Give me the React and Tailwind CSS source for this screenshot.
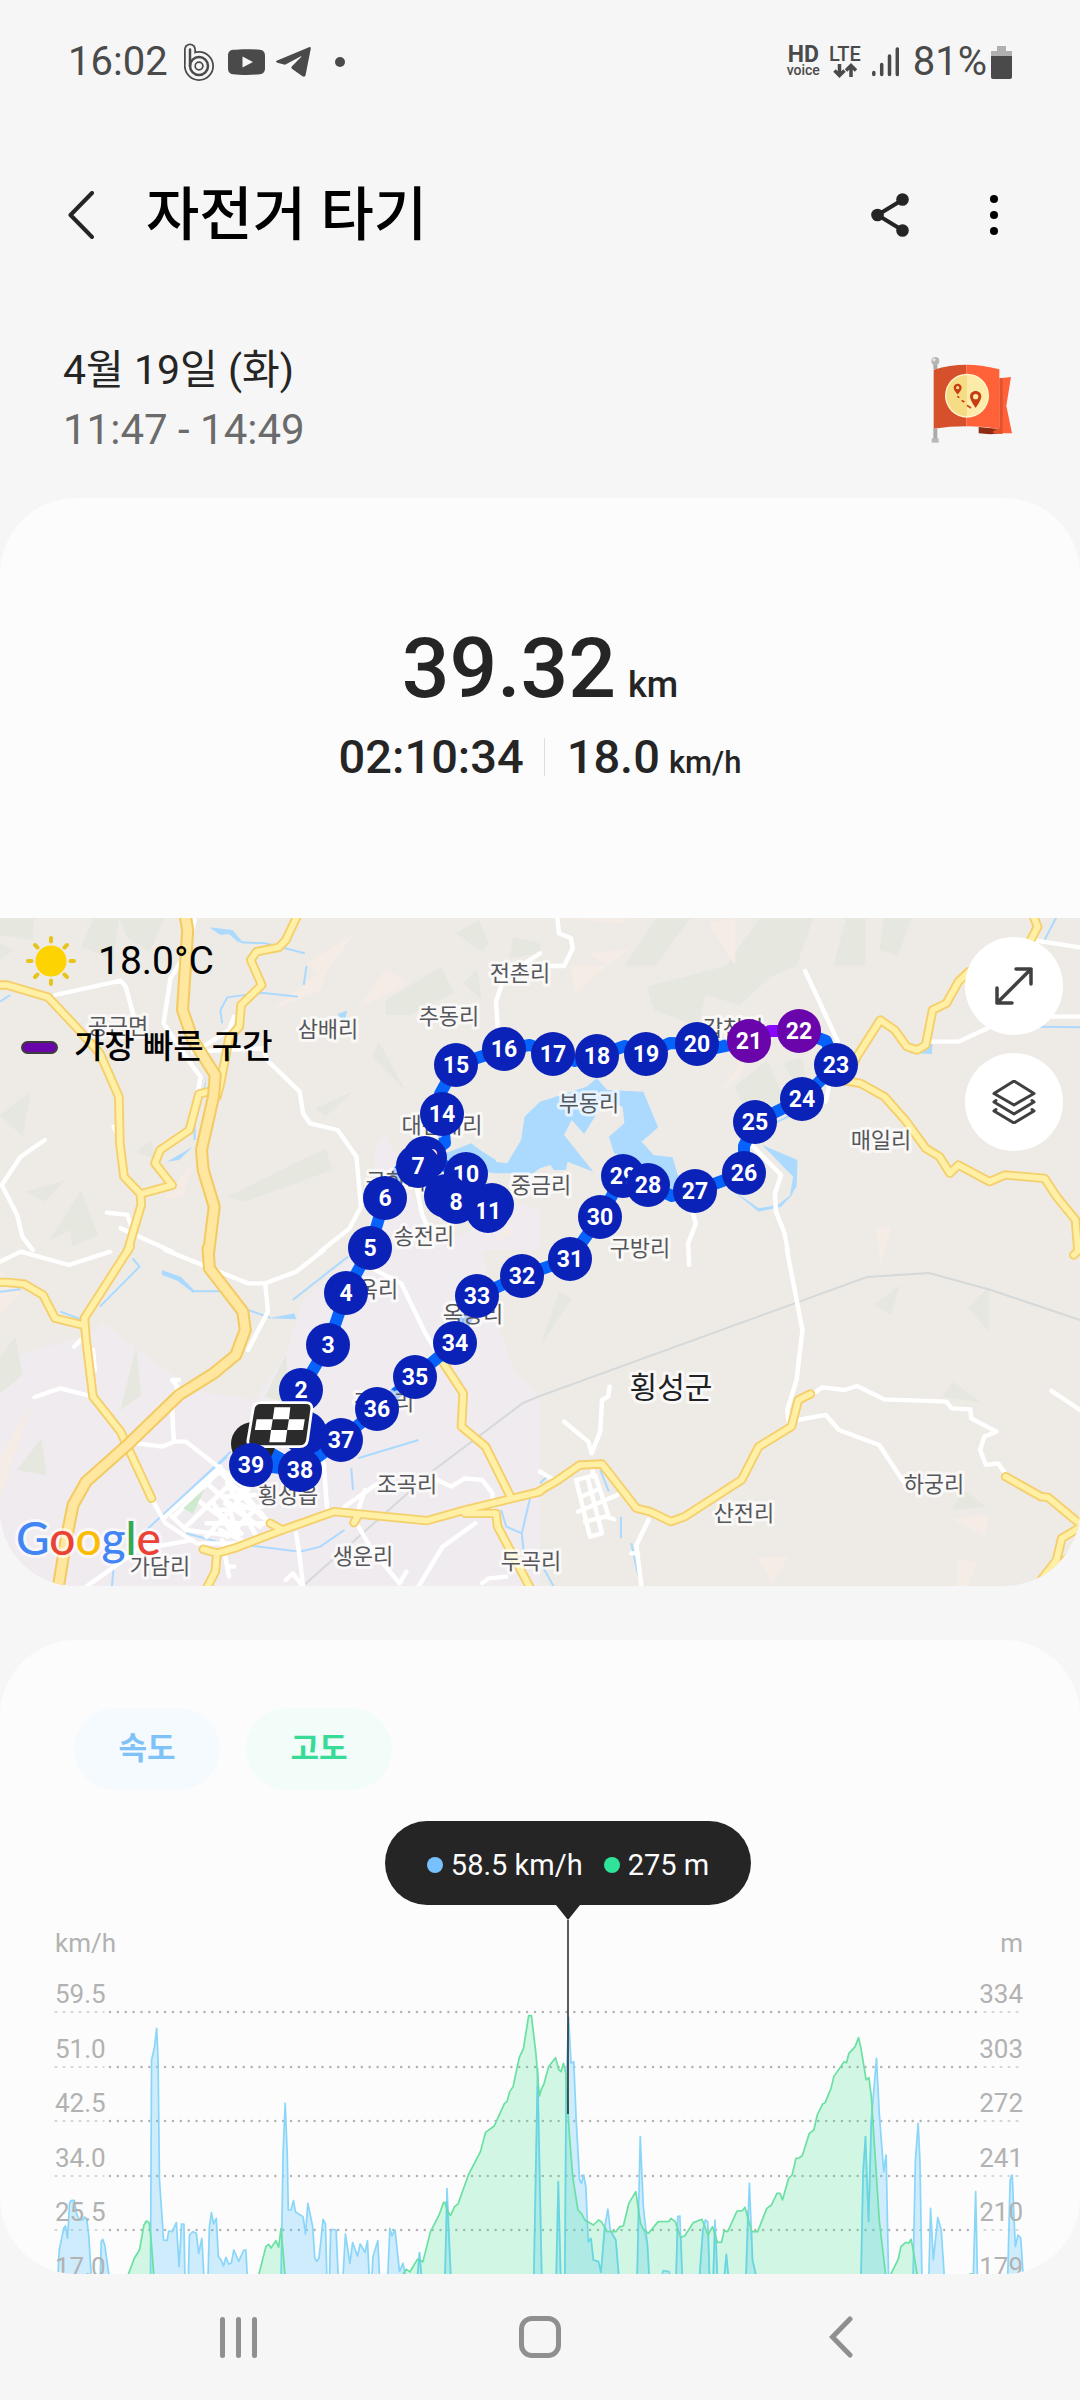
import React from "react";

/* ---------- Status bar ---------- */

function StatusBar() {
  return (
    <div className="flex items-center justify-between px-[68px] pt-[34px] text-[40px] leading-[56px] text-[#4a4a4a]">
      <div className="flex items-center">
        <span>16:02</span>
        <svg className="ml-[16px] h-[38px] w-[30px]" viewBox="0 0 30 38" fill="none" strokeLinecap="round" aria-hidden="true">
          <g stroke="#4a4a4a" strokeWidth="12">
            <path d="M6 6.500V23" />
            <circle cx="15" cy="23" r="9" />
          </g>
          <g stroke="#f6f6f6" strokeWidth="8.500">
            <path d="M6 6.500V23" />
            <circle cx="15" cy="23" r="9" />
          </g>
          <g stroke="#4a4a4a" strokeWidth="2.500">
            <path d="M6 6.500V23" />
            <circle cx="15" cy="23" r="9" />
          </g>
        </svg>
        <svg className="ml-[14px] h-[26px] w-[37px]" viewBox="0 0 37 26" aria-hidden="true">
          <path d="M5 .8C12-.1 25-.1 32 .8c3 .4 5 2.200 5 6v12.400c0 3.800-2 5.600-5 6-7 .9-20 .9-27 0-3-.4-5-2.200-5-6V6.800c0-3.800 2-5.600 5-6Z" fill="#4a4a4a" />
          <path d="M14.500 7.500v11L25 13Z" fill="#f6f6f6" />
        </svg>
        <svg className="ml-[11px] h-[30px] w-[35px]" viewBox="0 0 35 30" aria-hidden="true">
          <path d="M33 .2 1.200 13.400c-1.600.7-1.600 1.800.1 2.300l7.700 2L24.500 9.400c.8-.4 1.200.1.6.7L16 19.300c-.9 1-.8 1.900.2 2.700l10.300 7.300c1.600 1 2.700.4 3.100-1.200L34.700 2C35 .5 34.200-.2 33 .2Z" fill="#4a4a4a" />
        </svg>
        <span className="ml-[24px] size-[10px] rounded-full bg-[#4a4a4a]" />
      </div>
      <div className="flex items-center">
        <span className="flex flex-col items-center font-bold">
          <span className="text-[23px] leading-[16px]">HD</span>
          <span className="text-[14px] leading-[14px] font-medium">voice</span>
        </span>
        <span className="ml-[9px] flex flex-col items-center font-bold">
          <span className="text-[20px] leading-[17px] font-medium">LTE</span>
          <svg className="h-[15px] w-[24px]" viewBox="0 0 24 15" fill="none" stroke="#4a4a4a" strokeWidth="3.500" aria-hidden="true">
            <path d="M6.500 1v11M1.500 7.500l5 5 5-5M18 14V3M13 7.500l5-5 5 5" />
          </svg>
        </span>
        <svg className="ml-[11px] h-[30px] w-[27px]" viewBox="0 0 27 30" stroke="#4a4a4a" strokeWidth="3.500" strokeLinecap="round" aria-hidden="true">
          <path d="M1.800 25.500v2M9.700 17.500v10M17.500 9v18.500M25.300 2v25.500" />
        </svg>
        <span className="ml-[14px]">81%</span>
        <svg className="ml-[4px] h-[33px] w-[21px]" viewBox="0 0 21 33" aria-hidden="true">
          <path d="M6 0h9v5h6v6H0V5h6Z" fill="#b0b0b0" />
          <path d="M0 10h21v21q0 2-2 2H2q-2 0-2-2Z" fill="#4a4a4a" />
        </svg>
      </div>
    </div>
  );
}

/* ---------- Title bar and date ---------- */

function TitleBar() {
  return (
    <header className="flex items-center pt-[75px] pr-[62px] pl-[54px]">
      <button type="button" aria-label="뒤로" className="flex h-[100px] w-[54px] items-center justify-center">
        <svg className="h-[48px] w-[26px]" viewBox="0 0 26 48" fill="none" stroke="#252525" strokeWidth="4" strokeLinecap="round" strokeLinejoin="round" aria-hidden="true">
          <path d="M24 2 2.500 24 24 46" />
        </svg>
      </button>
      <h1 className="ml-[38px] flex-1 text-[58px] leading-[80px] font-medium text-black">자전거 타기</h1>
      <button type="button" aria-label="공유" className="flex h-[100px] w-[60px] items-center justify-center">
        <svg className="h-[44px] w-[38px]" viewBox="0 0 38 44" fill="#252525" stroke="#252525" aria-hidden="true">
          <path d="M32 6.500 6.500 22 32 37.500" fill="none" strokeWidth="4" />
          <g stroke="none">
            <circle cx="6.500" cy="22" r="6.300" />
            <circle cx="31.500" cy="6.500" r="6.300" />
            <circle cx="31.500" cy="37.500" r="6.300" />
          </g>
        </svg>
      </button>
      <button type="button" aria-label="옵션 더보기" className="ml-[50px] flex h-[100px] w-[48px] flex-col items-center justify-center gap-[8px]">
        <span className="size-[8px] rounded-full bg-black" />
        <span className="size-[8px] rounded-full bg-black" />
        <span className="size-[8px] rounded-full bg-black" />
      </button>
    </header>
  );
}

function FlagBadge() {
  return (
    <svg className="h-[90px] w-[85px]" viewBox="88 70 255 270" role="img" aria-label="코스 완주">
      <path d="M300 140 334 136 320 222 337 305H300Z" fill="#ff6238" />
      <path d="M237 286 300 292 308 305Q270 310 237 305Z" fill="#8d2c12" />
      <path d="M299 140h10v166h-10q-30 0-14-10l14-8Z" fill="#e2522c" />
      <path d="M102 114Q150 99 200 99V284Q150 284 102 291Z" fill="#d5502b" />
      <path d="M200 99Q250 99 299 113V292Q250 283 200 284Z" fill="#ff6238" />
      <path d="M101 98h12v14h-12ZM101 291h12v32h-12Z" fill="#aaa" />
      <path d="M96 320h21v13H96Z" fill="#b8b8b8" />
      <circle cx="107" cy="88" r="12" fill="#b5b5b5" />
      <circle cx="103" cy="84" r="5" fill="#e4e4e4" />
      <circle cx="202" cy="192" r="66" fill="#fff6cd" />
      <path d="M202 130a62 62 0 0 0 0 124Z" fill="#f5dc85" />
      <path d="M202 130a62 62 0 0 1 0 124Z" fill="#fdeba9" />
      <g fill="#c63d14">
        <path fillRule="evenodd" d="M174 156c-7 0-12 5-12 12 0 8 12 20 12 20s12-12 12-20c0-7-5-12-12-12Zm0 7a5 5 0 1 1 0 10 5 5 0 0 1 0-10Z" />
        <path fillRule="evenodd" d="M228 178c-10 0-17 7-17 16 0 13 17 35 17 35s17-22 17-35c0-9-7-16-17-16Zm0 9a8 8 0 1 1 0 16 8 8 0 0 1 0-16Z" />
      </g>
      <path d="M173 194l6 4M186 206l8 5M202 221l12 8" stroke="#c63d14" strokeWidth="5" />
    </svg>
  );
}

/* ---------- Map ----------
   Four quadrants; each is drawn on its own 1568-unit grid. */

const QUADRANTS = [
  {
    id: "nw",
    transform: "translate(0 -8) scale(.3444 .3333)",
    green: "M0 20H100L95 90 0 75ZM0 100 40 120 0 150ZM345 20 H480L435 125 370 85ZM275 20 235 110 330 150 345 25ZM90 545 0 615 65 680ZM1390 30 1325 70 1400 125 1420 100ZM1280 170 1120 270V315H1190L1320 250ZM1385 180 1345 220 1400 270ZM1100 395 1080 440 1180 545ZM1025 545 915 595 945 620ZM945 715 660 860 710 875 965 780ZM235 840 145 990 205 960 210 1010 285 975ZM190 810 75 845 130 875ZM440 690 395 725 450 750ZM1490 80 1568 100V130L1480 145Z",
    peach: "M1030 70 890 160 925 190 790 300 930 240 950 180ZM1120 178 1045 292 1185 220ZM560 760 475 865 530 860ZM1470 950 1430 1000 1490 970Z",
    urban: "M1120 670 1085 720 1090 800 1060 1020H1568V900L1500 880 1300 1000 1230 940 1160 760Z",
    water: "M607 52 675 60 708 100 690 95 665 72 640 75ZM980 312 1008 302 1000 340ZM485 755 560 710 520 750ZM600 500 585 560 595 540ZM1310 745 1370 705 1440 750 1440 790 1300 775Z",
    streams: "M700 97 770 100 885 130M890 168 882 225M645 340 640 300 660 262 760 248 865 260M565 620V690M0 275 30 255",
    minor: "M160 255 350 212 365 230 390 325M565 30 545 120 495 205 475 340 560 470 582 500 575 545M680 320 665 360 590 410M560 425 765 415 775 450 870 545 880 610 900 640 980 660 1035 740 1048 890 1015 955 930 1025M130 690 60 740 5 825 50 915 65 980 95 1020M310 908 370 915 385 960M350 955 500 1025M1568 130 1465 200 1440 275 1445 350M1210 835 1225 910 1240 950M330 650 345 680",
    major: "M862 0V20L830 90 810 112 745 125 728 150 760 225 700 285 695 350 665 385 640 520 630 560M-10 225H20L140 262 220 350 290 430 345 560 348 700 360 800 408 852 500 826 450 760 465 720 550 660 578 552 605 545M408 852 410 885 370 1025",
    highway: "M535 0 545 60 530 300 560 390 625 495 620 560 585 720 590 780 622 890 606 1025",
  },
  {
    id: "ne",
    transform: "translate(540 -8) scale(.3444 .3333)",
    green: "M340 20H440L335 167H245ZM640 20H795L745 167 670 200 580 285 480 255 460 350 330 300 310 230 540 167ZM890 20H945V167H852ZM1000 20H1080L1040 137 985 120ZM660 450 565 530 600 600 720 590ZM760 440 705 460 740 520 770 500Z",
    peach: "M0 20H255L240 40ZM490 40 567 20V167ZM140 130 260 118 195 167ZM90 167 195 167 100 250ZM600 430 525 545 580 500ZM975 955 1020 950 990 1060Z",
    urban: "",
    water: "M-45 620 0 575 135 530 165 505 195 540 300 545 343 652 295 695 330 735 385 742 410 830 370 850 300 770 215 730 200 680 245 640 240 590 190 570 128 672 92 630 70 675 155 785 80 755 75 780H40L30 765 0 775-20 790-130 790-210 720-280 790-300 740-200 700-130 755-95 760-55 690ZM645 705 748 750 745 830 725 860 735 800ZM545 830 635 895 690 885 740 845 700 890 635 905ZM1140 400 1138 432 1075 430 1100 420Z",
    streams: "M1500 20 1460 100M1568 352 1450 350M680 640 760 600M520 390H590",
    minor: "M50 20 55 70 90 85 95 115 70 168H-10M770 183 865 395 830 575M1440 92 1568 112M1480 320H1568M1300 355 1215 395H1130M600 690 700 795 682 850 685 905 710 970 720 1025M440 900 453 940 430 1000 433 1065",
    major: "M1425 0 1445 50 1425 90M1245 185 1215 215 1180 280 1140 300 1120 405 1095 420 1065 410 1030 360 988 330 920 440 890 510M860 508 930 520 1000 560 1060 630 1120 715 1160 740 1190 790 1215 765 1305 815 1350 795 1465 805 1500 860 1555 930 1562 1020",
    highway: "",
  },
  {
    id: "sw",
    transform: "translate(0 332) scale(.3444 .3333)",
    green: "M45 260 0 320V430L65 375ZM395 290 350 480 410 435ZM830 315 770 440 840 460ZM120 565 50 660 135 675Z",
    peach: "M0 60V190L60 130ZM100 445 0 620V740Z",
    urban: "M0 330 240 260 300 220 380 280 560 420 740 450 830 310 880 150 1040 0H1400L1450 230 1490 360 1568 440V1050H0Z",
    water: "M470 60 525 80 565 122 560 128 515 92 470 75ZM780 205 855 190 860 208Z",
    streams: "M560 124H640M850 150 1010 20M720 180 785 203M325 1010 330 950M540 850 630 875 870 905 930 890 1000 840M1020 655 1025 720M1040 625 1215 570M1455 780 1470 830 1515 850 1540 740M290 170 405 50 385 25M420 845 670 605M475 800 660 620M0 125 60 118M175 185 240 210M1515 850 1520 900",
    minor: "M0 35 60 5 200 45 320 5M480 0 720 100H770L860 65 940 0M770 100 778 185 720 300M100 442 175 415 270 440M500 390 515 410 500 480 505 575H540L720 720M505 575 470 590 400 580M270 300 275 360M215 290 245 260M1090 60 1165 100 1235 250 1285 335M440 745 480 820 570 880H720M480 800 640 650M940 640 950 780M880 1010 870 920 860 850M1000 770 1090 705H1120M1060 720 1030 810 1080 900 1160 1000 1180 965M1270 690 1310 710 1350 685 1400 690 1430 730V790M1380 820 1285 890 1215 1010M1400 1000 1420 985 1470 980M250 1010 400 900 560 870M645 870 665 980M660 950H680M830 990 850 970 880 1010M500 800 540 840 650 855M520 390 500 390",
    major: "M378-10 245 205 250 270 270 440 350 545 440 745M-10 97 20 97 70 102 125 135 160 205 240 225M590 898 630 910 680 895 820 840 970 785 1240 812 1350 780 1568 725M630 910 625 965 600 1015M1350 790H1440L1445 830 1540 1015M1285 335 1345 430 1340 530 1410 590 1480 735M1028 818 1040 795M785 820 820 840",
    highway: "M604-5 608 55 705 185 712 240 685 315 620 370 520 435 375 580 250 695 212 765 190 880 168 1020",
  },
  {
    id: "se",
    transform: "translate(540 332) scale(.3444 .3333)",
    green: "M55 125 92 145 0 290ZM1045 105 970 165 1020 195ZM1305 110 1242 172 1303 245ZM1200 395 1168 440 1285 460ZM1225 715 1198 780 1295 770Z",
    peach: "M630 922H720L675 1000ZM1198 808 1300 792 1292 858ZM1213 925 1268 940 1240 1010H1213ZM985 0H1000L990 45Z",
    urban: "",
    water: "",
    streams: "M235 800V865M265 880 285 975M5 945 40 1010M175 660 200 725M0 700 20 680",
    minor: "M717 0 762 240 745 390 718 480 722 515M795 430 820 412 885 420 920 408 1000 448 1180 455 1195 475 1250 478 1252 505 1325 545 1290 560 1278 600 1295 645 1330 640 1350 670M750 510 830 495 868 540 985 585 1055 695M70 515 140 575 150 610 175 545 180 450 198 440 202 410M315 810 280 885 295 1015M265 910H285M1485 422 1568 480M105 690 145 860 180 850 140 690M105 690 160 675 200 800M120 740 165 720M110 785 225 735M130 815 190 800 215 808M150 640 155 680M0 665 40 690",
    major: "M-10 728 50 692 115 645 180 642 280 775 320 785 380 815 420 800 585 690 635 590 730 530 750 450 785 432M1352 680 1455 740 1475 742 1575 828 1515 865 1500 930 1455 990M1575 890 1455 990M1570-5 1550 15",
    highway: "",
  },
];

const TOWN_BLOCKS =
  "M505 800 640 660M540 830 680 690M600 860 720 720M560 740 640 800M600 700 700 790M640 665 760 800M660 700 740 850M620 760 680 860M700 720 790 830M600 820 780 820M640 780 760 770M650 740 740 735M660 860 740 780M625 780 700 850M655 760 755 830M670 790 690 860M690 760 760 790M640 840 700 870";

const ROUTE =
  "M253 525 300 552 312 515 301 472 328 427 346 375 370 330 385 280 400 252 425 240 466 256 446 278 488 293 493 284 466 256 425 240 445 225 442 196 440 176 456 147 504 131 530 127 553 136 575 143 597 138 625 128 646 136 670 125 697 126 715 130 749 123";
const ROUTE_FAST = "M749 123 770 113 799 113";
const ROUTE_END =
  "M799 113 826 123 836 147 802 181 755 204 744 228 744 255 695 273 672 278 648 267 623 258 600 299 570 341 522 358 477 378 455 425 415 459 377 491 341 522 300 552 251 547";

const PLACES = [
  ["전촌리", 520, 55], ["추동리", 449, 98], ["삼배리", 328, 111], ["공근면", 118, 108],
  ["대관대리", 442, 207], ["구학리", 396, 263], ["중금리", 541, 267], ["송전리", 424, 318],
  ["부동리", 589, 185], ["갑천면", 733, 110], ["매일리", 881, 222], ["구방리", 640, 330],
  ["곡옥리", 368, 371], ["옥동리", 473, 396], ["갈풍리", 384, 484], ["횡성읍", 288, 577],
  ["조곡리", 407, 566], ["생운리", 363, 638], ["가담리", 160, 648], ["두곡리", 531, 643],
  ["산전리", 744, 595], ["하궁리", 934, 566],
];

const MARKERS = [
  [38, 300, 552], [37, 341, 522], [36, 377, 491], [35, 415, 459], [34, 455, 425],
  [33, 477, 378], [32, 522, 358], [31, 570, 341], [30, 600, 299], [29, 623, 258],
  [28, 648, 267], [27, 695, 273], [26, 744, 255], [25, 755, 204], [24, 802, 181],
  [23, 836, 147], [22, 799, 113], [21, 749, 123], [20, 697, 126], [19, 646, 136],
  [18, 597, 138], [17, 553, 136], [16, 504, 131], [15, 456, 147], [14, 442, 196],
  [13, 425, 240], [12, 492, 287], [10, 466, 256], [9, 446, 278], [11, 488, 293],
  [8, 456, 284], [7, 418, 248], [6, 385, 280], [5, 370, 330], [4, 346, 375],
  [3, 328, 427], [2, 301, 472], [1, 305, 515],
];

function Marker({ n, x, y }) {
  const fast = n === 21 || n === 22;
  return (
    <g>
      <circle cx={x} cy={y} r="22" fill={fast ? "#6a04ab" : "#0b22b8"} />
      <text x={x} y={y + 8} textAnchor="middle" fill="#fff" className="text-[23px] font-bold">
        {n}
      </text>
    </g>
  );
}

function RouteMap() {
  return (
    <svg className="block w-full" viewBox="0 0 1080 668" role="img" aria-label="이동 경로 지도">
      <rect width="1080" height="668" fill="#eeebe6" />
      {QUADRANTS.map((q) => (
        <g key={q.id} transform={q.transform}>
          <path d={q.urban} fill="#efebee" />
          <path d={q.green} fill="#e6e7de" />
          <path d={q.peach} fill="#f5ece6" />
          <path d={q.water} fill="#acdaff" />
          <path d={q.streams} fill="none" stroke="#acdaff" strokeWidth="6" />
        </g>
      ))}
      <g fill="none" stroke="#d5d9da" strokeWidth="2">
        <path d="M303 668 434 552 523 485 540 478 867 359 929 355 991 372 1080 402" />
      </g>
      <g fill="none" stroke="#fff" strokeLinecap="round" strokeLinejoin="round">
        {QUADRANTS.map((q) => (
          <path key={q.id} transform={q.transform} d={q.minor} strokeWidth="13" />
        ))}
        <g transform={QUADRANTS[2].transform}>
          <path d={TOWN_BLOCKS} strokeWidth="14" />
          <path d="M595 715 532 775 560 792Z" fill="#cfe9cf" stroke="none" />
        </g>
      </g>
      <g fill="none" strokeLinecap="round" strokeLinejoin="round">
        {QUADRANTS.map((q) => (
          <path key={q.id} transform={q.transform} d={q.major} stroke="#f5cf6c" strokeWidth="28" />
        ))}
        {QUADRANTS.map((q) => (
          <path key={q.id} transform={q.transform} d={q.major} stroke="#fff0a6" strokeWidth="17" />
        ))}
        {QUADRANTS.map((q) => (
          <path key={q.id} transform={q.transform} d={q.highway} stroke="#f3cb62" strokeWidth="38" />
        ))}
        {QUADRANTS.map((q) => (
          <path key={q.id} transform={q.transform} d={q.highway} stroke="#ffe79f" strokeWidth="26" />
        ))}
      </g>
      <g fill="none" strokeWidth="12" strokeLinecap="round" strokeLinejoin="round">
        <path d={ROUTE} stroke="#0563fb" />
        <path d={ROUTE_END} stroke="#0563fb" />
        <path d={ROUTE_FAST} stroke="#8a05ff" />
      </g>
      <g textAnchor="middle" stroke="#fff" strokeOpacity=".7" strokeWidth="6" strokeLinejoin="round" paintOrder="stroke">
        <g fill="#55575b" className="text-[22px]">
          {PLACES.map(([name, x, y]) => (
            <text key={name} x={x} y={y + 8}>
              {name}
            </text>
          ))}
        </g>
        <text x="671" y="480" fill="#202124" className="text-[30px]">
          횡성군
        </text>
      </g>
      <circle cx="253" cy="526" r="22" fill="#252525" />
      {MARKERS.map(([n, x, y]) => (
        <Marker key={n} n={n} x={x} y={y} />
      ))}
      <g transform={QUADRANTS[2].transform}>
        <path d="M757 458H888Q908 458 905 480L893 570Q890 590 870 590H737Q717 590 720 570L735 478Q738 458 757 458Z" fill="#2b2b2b" stroke="#fff" strokeWidth="8" />
        <path d="M797 472H843L839 508H885L880 540H834L829 577H782L787 540H740L745 508H792ZM792 508 787 540H834L839 508Z" fillRule="evenodd" fill="#fff" />
      </g>
      <Marker n={39} x={251} y={547} />
      <text x="16" y="637" stroke="#fff" strokeOpacity=".6" strokeWidth="6" strokeLinejoin="round" paintOrder="stroke" className="font-[Lato] text-[46px] font-medium">
        <tspan fill="#4285f4">G</tspan>
        <tspan fill="#ea4335">o</tspan>
        <tspan fill="#fbbc05">o</tspan>
        <tspan fill="#4285f4">g</tspan>
        <tspan fill="#34a853">l</tspan>
        <tspan fill="#ea4335">e</tspan>
      </text>
    </svg>
  );
}

function SunIcon() {
  return (
    <svg className="size-[50px]" viewBox="0 0 50 50" aria-hidden="true">
      <circle cx="25" cy="25" r="15.500" fill="#fdd302" />
      <path d="M25 2v3.500M25 44.500V48M2 25h3.500M44.500 25H48M9 9l2.500 2.500M38.500 38.500 41 41M9 41l2.500-2.500M38.500 11.500 41 9" stroke="#e6c41c" strokeWidth="4" strokeLinecap="round" />
    </svg>
  );
}

function MapSection() {
  return (
    <div className="relative">
      <RouteMap />
      <div className="absolute top-[16px] left-[26px] flex items-center gap-[22px] text-[39px] leading-[54px] text-black">
        <SunIcon />
        <span>18.0°C</span>
      </div>
      <div className="absolute top-[105px] left-[21px] flex items-center gap-[16px] text-[33px] leading-[48px] font-medium text-black">
        <span className="h-[13px] w-[37px] rounded-full border-2 border-[#3d3d3d] bg-[#6a04ab]" />
        <span>가장 빠른 구간</span>
      </div>
      <div className="absolute top-[19px] right-[17px] flex flex-col gap-[18px]">
        <button type="button" aria-label="지도 확대" className="flex size-[98px] items-center justify-center rounded-full bg-white">
          <svg className="size-[40px]" viewBox="0 0 40 40" fill="none" stroke="#404040" strokeWidth="3.500" strokeLinecap="round" strokeLinejoin="round" aria-hidden="true">
            <path d="M22 3h15v15M37 3 3 37M3 22v15h15" />
          </svg>
        </button>
        <button type="button" aria-label="지도 유형" className="flex size-[98px] items-center justify-center rounded-full bg-white">
          <svg className="size-[44px]" viewBox="0 0 44 44" fill="none" stroke="#404040" strokeWidth="3" strokeLinecap="round" strokeLinejoin="round" aria-hidden="true">
            <path d="M22 1 42 13.500 22 25 2 13.500ZM4 20.500l-2 1.500 20 12 20-12-2-1.500M4 29.500 2 31l20 12 20-12-2-1.500" />
          </svg>
        </button>
      </div>
    </div>
  );
}

/* ---------- Chart ---------- */

const SPEED_LEFT =
  "M168 1070 172 990 185 925 190 918 196 955 202 850 206 842 216 841 222 880 230 900 240 900 246 891 252 897 258 950 265 1070M291 1070 294 965 298 958 304 975 317 1070M437 1070 440 420 448 385 455 325 459 420 463 780 475 960 485 962 490 933 500 935 512 908 520 1040 527 912 534 912 537 1070M547 1070 550 945 560 935 570 940 577 1000 586 955 592 1070M604 1070 608 920 614 878 620 912 628 895 634 1010 642 1020 649 1038 656 1012 664 1033 672 1028 679 990 693 1024 708 990 714 990 718 1070M816 1070 822 700 828 550 834 700 837 870 845 870 852 842 858 876 880 890 887 942 894 850 908 920 914 1015 920 1024 926 1015 932 960 938 898 945 912 949 1070M957 1070 960 935 965 928 976 930 982 1070M996 1070 1003 942 1016 1030 1024 968 1038 1008 1046 972 1060 998 1067 962 1072 1070M1080 1070 1083 1010 1097 962 1102 1070M1126 1070 1132 925 1138 948 1147 930 1160 1055 1170 1030 1178 1070M1212 1070 1218 998 1224 1070M1292 1070 1298 806 1309 1070M1550 1070 1561 445 1573 1070";

const SPEED_RIGHT =
  "M47 1070 53 785 60 1070M72 1070 76 500 83 292 90 430 98 425 105 600 115 780 120 790 127 765 133 800 140 965 148 955 155 1020 170 1025 177 1057 188 920 197 867 204 930 220 960 229 1070M282 1070 291 650 300 860 312 975 317 1070M352 1070 358 1052 375 1055 379 1070M395 1070 400 890 406 888 413 1070M463 1070 473 930 480 900 487 905 492 1070M503 1070 508 900 515 1070M535 1070 541 1003 547 1070M598 1070 608 790 617 1020 628 1070M932 1070 938 760 945 650 954 905 962 600 977 415 985 580 998 755 1005 705 1012 1070M1083 1070 1090 720 1098 610 1103 720 1109 1070M1129 1070 1134 865 1142 1020 1155 893 1165 930 1174 1070M1258 1070 1265 815 1270 1070M1358 1070 1365 780 1371 765 1380 980 1388 945 1396 955 1403 1070";

const HALF = 1568;

/* The long climb spans both halves of the chart: [x, y] pairs per half. */
const CLIMB_LEFT = [
  1165, 1070, 1180, 1048, 1190, 1056, 1212, 1018, 1228, 1025, 1250, 935, 1275, 885, 1288, 847, 1292, 847,
  1298, 870, 1308, 887, 1320, 860, 1330, 852, 1360, 765, 1395, 695, 1410, 637, 1435, 618, 1465, 550,
  1472, 545, 1480, 515, 1490, 500, 1502, 440, 1508, 412, 1520, 385, 1535, 287, 1543, 287, 1556, 400, 1566, 528,
];
const CLIMB_RIGHT = [
  5, 505, 12, 490, 25, 440, 45, 413, 54, 448, 61, 455, 68, 430, 75, 460, 85, 640, 95, 770, 110, 870, 120, 880,
  130, 900, 155, 915, 170, 900, 178, 905, 195, 935, 220, 935, 232, 920, 242, 918, 258, 850, 278, 815,
  292, 910, 300, 928, 315, 940, 343, 905, 375, 904, 380, 895, 393, 905, 408, 952, 420, 948, 445, 908,
  470, 898, 488, 945, 501, 920, 515, 967, 527, 967, 535, 932, 545, 935, 572, 873, 588, 872, 595, 862,
  615, 935, 632, 935, 658, 866, 672, 855, 688, 820, 697, 820, 704, 840, 722, 775, 732, 765, 743, 715,
  752, 714, 762, 706, 782, 640, 795, 630, 805, 585, 820, 553, 828, 548, 845, 505, 853, 470, 883, 425,
  890, 428, 897, 400, 915, 380, 925, 353, 932, 385, 947, 480, 955, 473, 962, 530, 985, 900, 1004, 1070,
];
const CLIMB = [...CLIMB_LEFT, ...CLIMB_RIGHT.map((v, i) => (i % 2 ? v : v + HALF))].join(" ");

const AXIS = [
  ["59.5", "334", 92],
  ["51.0", "303", 147],
  ["42.5", "272", 201],
  ["34.0", "241", 256],
  ["25.5", "210", 310],
  ["17.0", "179", 365],
];

function Chart() {
  return (
    <svg className="block w-full" viewBox="0 0 1080 354" role="img" aria-label="속도와 고도 그래프">
      <g stroke="#b2b2b2" strokeLinecap="round">
        {AXIS.map(([speed, , y]) => (
          <g key={speed}>
            <path d={`M110 ${y}H976`} strokeWidth="2.500" strokeDasharray="0 7.870" />
            <path d={`M55 ${y}H104M984 ${y}H1024`} strokeWidth="1" strokeDasharray="2 6" />
          </g>
        ))}
      </g>
      <g transform="scale(.3444 .3333)" strokeWidth="5" strokeLinejoin="round">
        <g fill="#3bbcff" fillOpacity=".23" stroke="#8ad6f9">
          <path d={SPEED_LEFT} />
          <path d={SPEED_RIGHT} transform="translate(1568 0)" />
        </g>
        <g fill="#3ae58c" fillOpacity=".21" stroke="#6be0a3">
          <path d="M370 1070 390 1015 405 990 418 915 425 903 433 908 438 950 447 1070M750 1070 772 980 780 973 787 984 801 962 809 982 816 925 828 1070" />
          <polyline points={CLIMB} />
          <path transform="translate(1568 0)" d="M1015 1070 1040 1018 1048 980 1062 967 1070 970 1077 958 1082 980 1096 1070M1246 1062H1258" />
        </g>
        <g fill="none" stroke="#45cde0" strokeOpacity=".3">
          <path d="M1212 1070 1218 998 1224 1070M1292 1070 1298 845 1309 1070M1550 1070 1561 500 1573 1070" />
          <path transform="translate(1568 0)" d="M47 1070 53 785 60 1070M72 1070 76 470M140 965 148 955 155 1020 170 1025 177 1057 188 920M208 940 220 960 229 1070M282 1070 286 860M301 930 312 975 317 1070M395 1070 399 925M409 950 413 1070M463 1070 473 930M489 940 492 1070M503 1070 507 930M511 960 515 1070M535 1070 541 1003 547 1070M598 1070 603 870M614 935 617 1020 628 1070M932 1070 938 760 945 650 954 905 962 600" />
        </g>
      </g>
      <path d="M568 0V194" stroke="#252525" strokeWidth="1.500" />
      <g fill="#b2b2b2" className="text-[26px]">
        <text x="55" y="32">km/h</text>
        <text x="1023" y="32" textAnchor="end">m</text>
        {AXIS.map(([speed, altitude, y]) => (
          <g key={speed}>
            <text x="55" y={y - 9}>{speed}</text>
            <text x="1023" y={y - 9} textAnchor="end">{altitude}</text>
          </g>
        ))}
      </g>
    </svg>
  );
}

function ChartCard() {
  return (
    <section className="mt-[54px] overflow-hidden rounded-[76px] bg-[#fcfcfc] pt-[68px]">
      <div className="flex gap-[26px] px-[74px] text-[31px] leading-[44px] font-bold">
        <button type="button" aria-pressed="true" className="h-[82px] w-[146px] rounded-full bg-[#f5fafe] text-[#7fc2f8]">속도</button>
        <button type="button" aria-pressed="true" className="h-[82px] w-[146px] rounded-full bg-[#f2fdf9] text-[#37da96]">고도</button>
      </div>
      <div className="mt-[31px] ml-[56px] flex flex-col items-center">
        <div className="flex h-[84px] items-center rounded-full bg-[#252525] px-[42px] pt-[4px] text-[29px] leading-[40px] text-[#fcfcfc]">
          <span className="mr-[8px] size-[16px] rounded-full bg-[#78c1ff]" />
          <span>58.5 km/h</span>
          <span className="mr-[8px] ml-[21px] size-[16px] rounded-full bg-[#2fe39a]" />
          <span>275 m</span>
        </div>
        <svg className="h-[15px] w-[24px]" viewBox="0 0 24 15" aria-hidden="true">
          <path d="M0 0H24L12 15Z" fill="#252525" />
        </svg>
      </div>
      <Chart />
    </section>
  );
}

/* ---------- System navigation ---------- */

function NavBar() {
  return (
    <nav className="grid grid-cols-3 px-[88px]">
      <button type="button" aria-label="최근 앱" className="flex h-[126px] items-center justify-center gap-[11px]">
        <span className="h-[41px] w-[5px] rounded-full bg-[#8f8f8f]" />
        <span className="h-[41px] w-[5px] rounded-full bg-[#8f8f8f]" />
        <span className="h-[41px] w-[5px] rounded-full bg-[#8f8f8f]" />
      </button>
      <button type="button" aria-label="홈" className="flex h-[126px] items-center justify-center">
        <span className="size-[42px] rounded-[13px] border-[5px] border-[#8f8f8f]" />
      </button>
      <button type="button" aria-label="뒤로 가기" className="flex h-[126px] items-center justify-center">
        <svg className="h-[42px] w-[24px]" viewBox="0 0 24 42" fill="none" stroke="#8f8f8f" strokeWidth="5" strokeLinecap="round" aria-hidden="true">
          <path d="M21 3 3.500 21 21 39" />
        </svg>
      </button>
    </nav>
  );
}

export default function App() {
  return (
    <div className="min-h-screen bg-[#f6f6f6] font-[Roboto,'Noto_Sans_CJK_KR',sans-serif]">
      <StatusBar />
      <TitleBar />
      <main>
        <div className="flex items-center justify-between pt-[75px] pr-[66px] pb-[38px] pl-[63px]">
          <div className="leading-[60px]">
            <p className="text-[41px] text-[#252525]">4월 19일 (화)</p>
            <p className="text-[42px] text-[#6b6b6b]">11:47 - 14:49</p>
          </div>
          <FlagBadge />
        </div>
        <section className="overflow-hidden rounded-[76px] bg-[#fcfcfc]">
          <div className="flex flex-col items-center pt-[117px] pb-[127px] font-medium text-[#252525]">
            <p className="flex items-baseline gap-[12px] text-[84px] leading-[108px]">
              39.32<span className="text-[36px] leading-none">km</span>
            </p>
            <div className="flex items-center text-[47px] leading-[68px]">
              <span>02:10:34</span>
              <span className="mr-[22px] ml-[20px] h-[38px] w-px bg-[#dedede]" />
              <span className="flex items-baseline gap-[9px]">
                18.0<span className="text-[31px] leading-none">km/h</span>
              </span>
            </div>
          </div>
          <MapSection />
        </section>
        <ChartCard />
      </main>
      <NavBar />
    </div>
  );
}
